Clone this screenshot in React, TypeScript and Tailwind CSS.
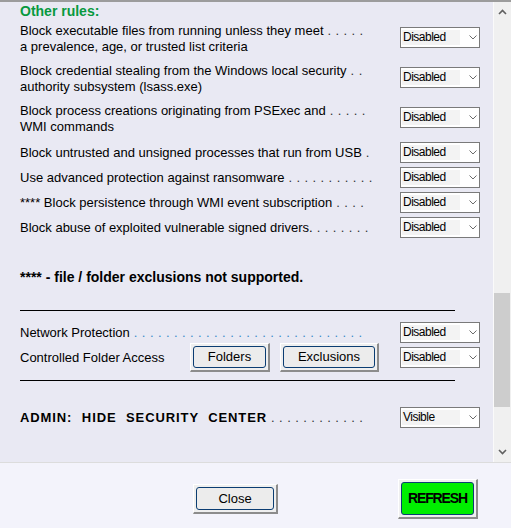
import React from 'react';

const rules: { lines: string[]; dots: string }[] = [
  { lines: ['Block executable files from running unless they meet', 'a prevalence, age, or trusted list criteria'], dots: '. . . . .' },
  { lines: ['Block credential stealing from the Windows local security', 'authority subsystem (lsass.exe)'], dots: '. .' },
  { lines: ['Block process creations originating from PSExec and', 'WMI commands'], dots: '. . . . .' },
];

const singleRules: { text: string; dots: string }[] = [
  { text: 'Block untrusted and unsigned processes that run from USB', dots: '.' },
  { text: 'Use advanced protection against ransomware', dots: '. . . . . . . . . . .' },
  { text: '**** Block persistence through WMI event subscription', dots: '. . . .' },
  { text: 'Block abuse of exploited vulnerable signed drivers.', dots: '. . . . . . .' },
];

function Chevron({ className }: { className?: string }) {
  return (
    <svg width="8" height="5" viewBox="0 0 8 5" className={className}>
      <path d="M0.5 0.5 L4 4 L7.5 0.5" fill="none" stroke="#6b6b6b" strokeWidth="1" />
    </svg>
  );
}

function Select({ value = 'Disabled' }: { value?: string }) {
  return (
    <div className="w-20 h-[21px] shrink-0 border border-[#7a7a7a] bg-white flex items-center">
      <div className="ml-px h-[15px] w-[58px] bg-[#f3f3f3] pl-px text-[12px] leading-[15px] tracking-[-0.5px] text-black">
        {value}
      </div>
      <Chevron className="ml-[9px]" />
    </div>
  );
}

function WinButton({ children, className, inner }: { children: React.ReactNode; className: string; inner: string }) {
  return (
    <div className={`shrink-0 border border-t-white border-l-white border-r-2 border-b-2 border-r-[#8c8c8c] border-b-[#8c8c8c] bg-[#efefef] p-[2px] ${className}`}>
      <div className={`h-full rounded-[3px] border border-[#0b3d72] flex items-center justify-center text-black ${inner}`}>
        {children}
      </div>
    </div>
  );
}

function Dots({ children, blue }: { children: string; blue?: boolean }) {
  return <span className={`tracking-[0.4px] ${blue ? 'text-[#3a8ac9]' : 'text-[#333]'}`}> {children}</span>;
}

export default function App() {
  return (
    <div className="w-[511px] h-[528px] flex flex-col bg-[#f3f3fb] text-[13px] text-black font-['Liberation_Sans',Arial,sans-serif]">
      <div className="h-[2px] bg-[#9c9c9c]" />
      <div className="h-[460px] flex bg-[#e9e9f3] overflow-hidden">
        <div className="flex-1 pl-5 pt-px">
          <div className="text-[14px] font-bold leading-4 text-[#08993f]">Other rules:</div>

          <div className="mt-1 flex flex-col gap-2">
            {rules.map((r, i) => (
              <div key={i} className="flex items-start">
                <div className="w-[380px] leading-4">
                  <div>
                    {r.lines[0]}
                    <Dots>{r.dots}</Dots>
                  </div>
                  <div>{r.lines[1]}</div>
                </div>
                <div className="mt-1">
                  <Select />
                </div>
              </div>
            ))}
          </div>

          <div className="mt-[7px] flex flex-col gap-1">
            {singleRules.map((r, i) => (
              <div key={i} className="flex items-center">
                <div className="w-[380px] leading-4">
                  {r.text}
                  <Dots>{r.dots}</Dots>
                </div>
                <Select />
              </div>
            ))}
          </div>

          <div className="mt-[31px] text-[14px] font-bold leading-4">**** - file / folder exclusions not supported.</div>

          <div className="mt-[25px] h-px w-[435px] bg-black" />

          <div className="mt-[11px] flex items-center">
            <div className="w-[380px] leading-4">
              Network Protection
              <Dots blue>. . . . . . . . . . . . . . . . . . . . . . . . . . . . .</Dots>
            </div>
            <Select />
          </div>

          <div className="flex items-center h-[29px]">
            <div className="w-[170px] leading-4">Controlled Folder Access</div>
            <WinButton className="w-20 h-[29px]" inner="bg-[#ececec]">Folders</WinButton>
            <WinButton className="ml-[10px] w-[99px] h-[29px]" inner="bg-[#ececec]">Exclusions</WinButton>
            <div className="ml-[21px]">
              <Select />
            </div>
          </div>

          <div className="mt-2 h-px w-[435px] bg-black" />

          <div className="mt-[26px] flex items-center">
            <div className="w-[380px] leading-4">
              <span className="font-bold tracking-[0.9px] [word-spacing:5px]">ADMIN: HIDE SECURITY CENTER</span>
              <Dots>. . . . . . . . . . . .</Dots>
            </div>
            <Select value="Visible" />
          </div>
        </div>

        <div className="w-[18px] flex flex-col border-l border-[#fafafa] bg-[#f0f0f0]">
          <div className="h-[20px] flex items-center justify-center">
            <svg width="9" height="6" viewBox="0 0 9 6">
              <path d="M1 5 L4.5 1.5 L8 5" fill="none" stroke="#606060" strokeWidth="1.6" />
            </svg>
          </div>
          <div className="mt-[271px] mr-px h-[114px] bg-[#cdcdcd]" />
          <div className="mt-auto h-[20px] flex items-center justify-center">
            <svg width="9" height="6" viewBox="0 0 9 6">
              <path d="M1 1 L4.5 4.5 L8 1" fill="none" stroke="#606060" strokeWidth="1.6" />
            </svg>
          </div>
        </div>
      </div>
      <div className="h-px bg-[#dcdcdc]" />

      <div className="flex-1 flex items-start">
        <WinButton className="mt-[21px] ml-[193px] w-[85px] h-[30px]" inner="bg-[#ececec]">
          Close
        </WinButton>
        <WinButton className="mt-4 ml-[120px] w-20 h-[40px]" inner="bg-[#00ee00]">
          <span className="text-[14px] font-bold tracking-[-1.1px]">REFRESH</span>
        </WinButton>
      </div>
    </div>
  );
}
